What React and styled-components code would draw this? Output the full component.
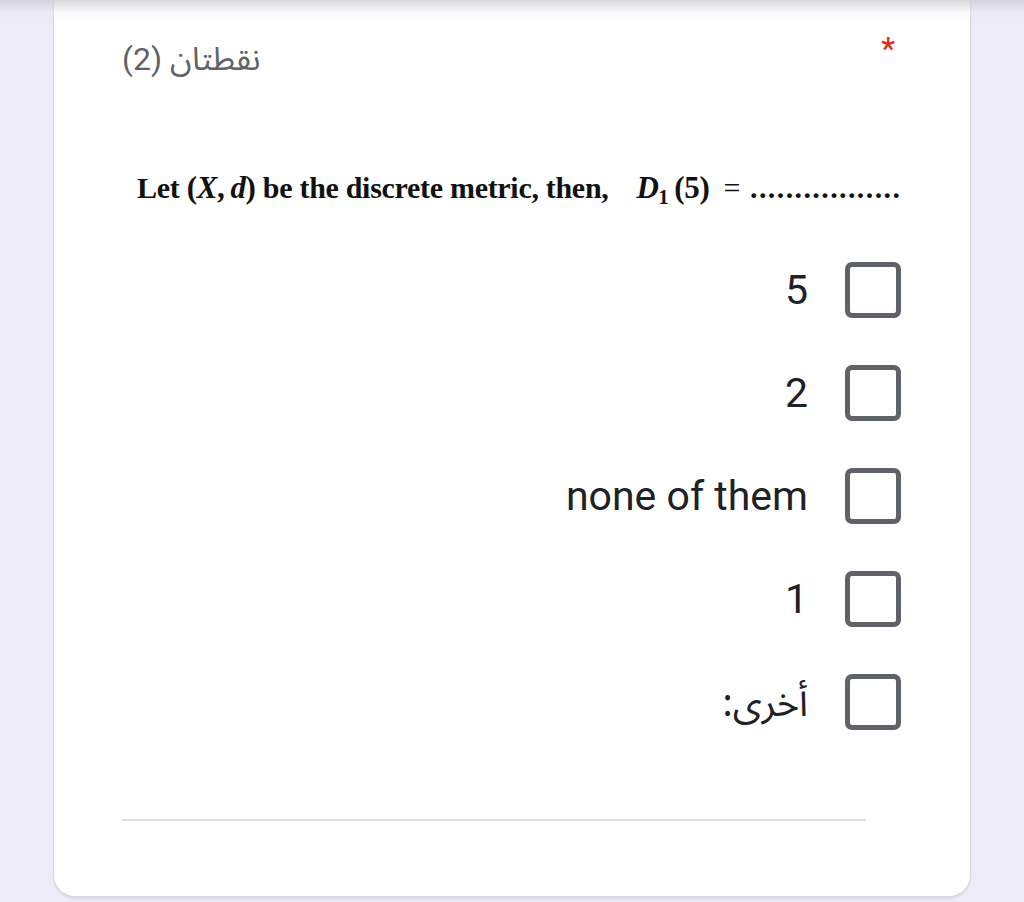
import React from 'react';
import styled, { createGlobalStyle } from 'styled-components';

const GlobalStyle = createGlobalStyle`
  html, body {
    margin: 0;
    padding: 0;
    background: #ecebf7;
  }
  body {
    font-family: Roboto, "Noto Sans", "DejaVu Sans", sans-serif;
  }
`;

const options = ['5', '2', 'none of them', '1'];

const App = () => {
  return (
    <Page>
      <GlobalStyle />
      <TopShade />
      <Card>
        <Header>
          <Required>*</Required>
          <Points>نقطتان (2)</Points>
        </Header>

        {/* question is an image in the form, text here */}
        <QuestionBox>
          <QuestionText>
            Let <Math>(<i>X</i>,&thinsp;<i>d</i>)</Math> be the discrete metric, then,
            <Math $gap>
              <i>D</i><sub>1</sub>&thinsp;(5)
            </Math>
            <Eq>=</Eq>
            <Dots>.................</Dots>
          </QuestionText>
        </QuestionBox>

        <OptionList>
          {options.map((opt) => (
            <OptionRow key={opt}>
              <Box />
              <Label>{opt}</Label>
            </OptionRow>
          ))}
          <OptionRow>
            <Box />
            <Label $arabic>أخرى:</Label>
          </OptionRow>
        </OptionList>

        <Divider />
      </Card>
    </Page>
  );
};

export default App;

const Page = styled.div`
  width: 1024px;
  height: 902px;
  position: relative;
  overflow: hidden;
`;

// shadow under the fixed header above the card
const TopShade = styled.div`
  position: absolute;
  left: 0;
  top: 0;
  width: 100%;
  height: 20px;
  background: linear-gradient(to bottom, rgba(200, 200, 205, 0.7), rgba(230, 230, 235, 0.25) 60%, rgba(255, 255, 255, 0));
  z-index: 2;
`;

const Card = styled.div`
  margin-left: 53px;
  width: 918px;
  height: 897px;
  box-sizing: border-box;
  background: #ffffff;
  border: 1px solid #d9d9e0;
  border-top: none;
  border-radius: 0 0 22px 22px;
  box-shadow: 0 2px 2px rgba(0, 0, 0, 0.08);
  padding: 34px 69px 0 68px;
  direction: rtl;
`;

const Header = styled.div`
  display: flex;
  justify-content: space-between;
  align-items: flex-start;
  height: 48px;
`;

const Required = styled.span`
  color: #d93025;
  font-size: 31px;
  font-weight: 500;
  line-height: 30px;
  margin-right: 6px;
  font-family: Roboto, sans-serif;
`;

const Points = styled.span`
  color: #5f6368;
  font-size: 32px;
  line-height: 50px;
  font-family: Roboto, "Noto Sans Arabic", "DejaVu Sans", sans-serif;
`;

const QuestionBox = styled.div`
  direction: ltr;
  margin-top: 86px;
  height: 40px;
  padding-left: 15px;
`;

const QuestionText = styled.div`
  font-family: "Liberation Serif", "Times New Roman", serif;
  font-weight: bold;
  font-size: 30px;
  line-height: 40px;
  color: #111111;
  white-space: nowrap;
  letter-spacing: -0.3px;

  i {
    font-style: italic;
  }

  sub {
    font-size: 20px;
    vertical-align: -6px;
    line-height: 0;
  }
`;

const Math = styled.span`
  font-weight: bold;
  font-size: 31px;
  margin-left: ${(p) => (p.$gap ? '28px' : '0')};
`;

const Eq = styled.span`
  font-weight: normal;
  margin: 0 10px 0 14px;
`;

const Dots = styled.span`
  letter-spacing: 1.4px;
`;

const OptionList = styled.div`
  margin-top: 54px;
  display: flex;
  flex-direction: column;
  gap: 47px;
`;

const OptionRow = styled.div`
  display: flex;
  align-items: center;
  gap: 37px;
  height: 56px;
`;

const Box = styled.div`
  width: 56px;
  height: 56px;
  box-sizing: border-box;
  border: 5px solid #5f6368;
  border-radius: 7px;
  flex-shrink: 0;
`;

const Label = styled.span`
  font-size: ${(p) => (p.$arabic ? '38px' : '41px')};
  color: #202124;
  font-family: ${(p) =>
    p.$arabic ? '"Noto Sans Arabic", "DejaVu Sans", sans-serif' : 'Roboto, sans-serif'};
  line-height: 56px;
  direction: ${(p) => (p.$arabic ? 'rtl' : 'ltr')};
  margin-top: ${(p) => (p.$arabic ? '4px' : '0')};
`;

const Divider = styled.div`
  margin-top: 89px;
  margin-right: 35px;
  height: 2px;
  background: #e0e0e3;
`;
